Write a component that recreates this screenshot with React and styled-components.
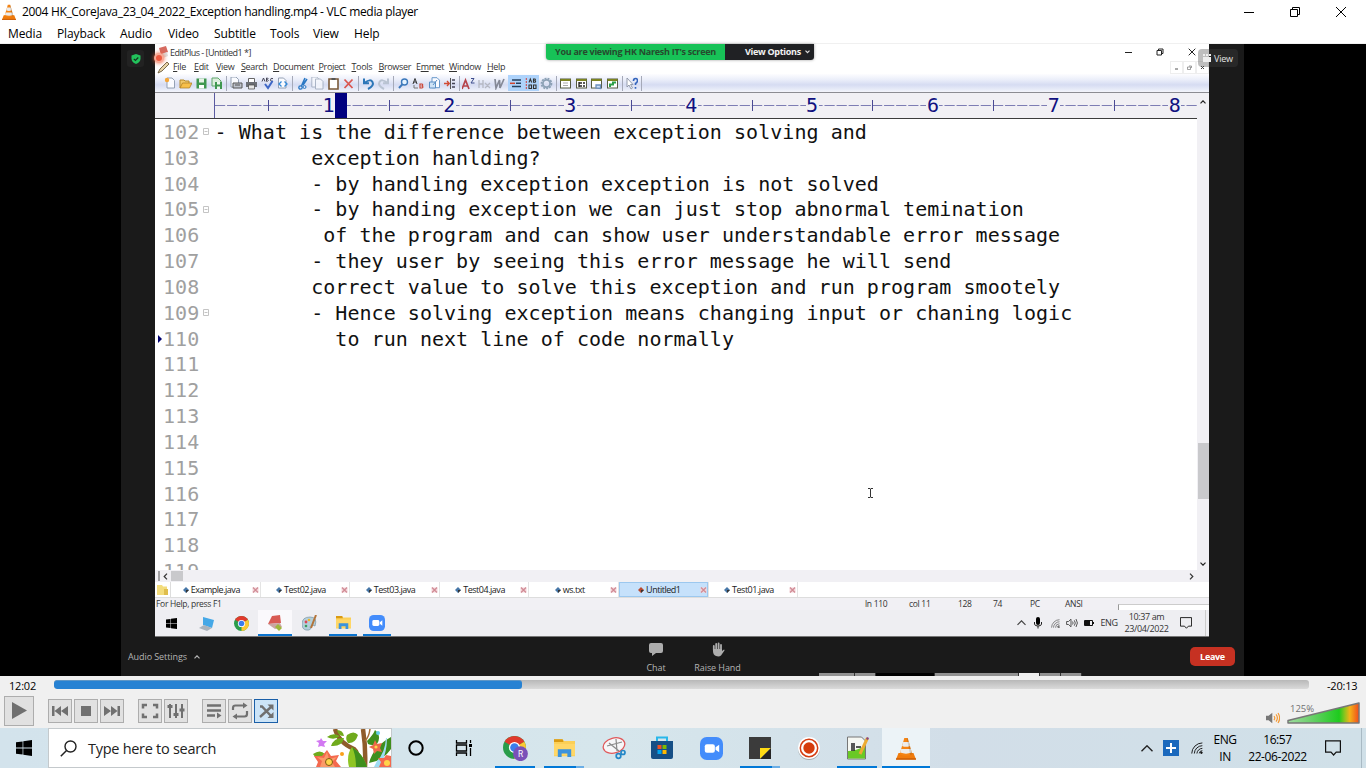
import React from "react";
import styled, { createGlobalStyle, css } from "styled-components";

const Global = createGlobalStyle`
  * { box-sizing: border-box; }
  html, body { margin: 0; padding: 0; overflow: hidden; }
  body { width: 1366px; height: 768px; font-family: "Open Sans", "Noto Sans", sans-serif; color: #000; }
  svg { display: block; flex: none; }
`;

const Screen = styled.div`
  width: 1366px; height: 768px; display: flex; flex-direction: column; background: #fff;
`;

/* ---------- player window ---------- */
const TitleBar = styled.header`
  height: 24px; display: flex; align-items: center; padding: 0 2px; flex: none;
`;
const Title = styled.span`
  font-size: 12px; line-height: 16px; margin-left: 6px; flex: 1; white-space: nowrap;
  letter-spacing: ${(p) => p.$ls || 0}px;
`;
const WindowButtons = styled.div`
  display: flex; height: 21px; align-items: center;
`;
const WinButton = styled.span`
  width: 46px; display: flex; justify-content: center;
`;
const MenuBar = styled.nav`
  height: 20px; flex: none; display: flex; align-items: center; border-bottom: 1px solid #f0f0f0;
`;
const MenuEntry = styled.span`
  font-size: 12px; line-height: 18px; padding-left: 8px; white-space: nowrap; flex: none;
  width: ${(p) => p.$w}px; letter-spacing: ${(p) => p.$ls || 0}px;
`;
const Stage = styled.main`
  height: 632px; flex: none; background: #000; display: flex; justify-content: center; padding-right: 1px;
`;

/* ---------- meeting window ---------- */
const Meeting = styled.section`
  width: 1123px; height: 632px; background: #1a1a1a; position: relative;
  display: flex; flex-direction: column; padding-left: 34px;
`;
const Shared = styled.section`
  width: 1054px; height: 593px; background: #fff; display: flex; flex-direction: column; flex: none;
  overflow: hidden; color: #333;
`;
const ShieldBadge = styled.div`
  position: absolute; left: 6px; top: 6px; width: 17px; height: 17px; border-radius: 3px; background: #222;
  display: flex; align-items: center; justify-content: center;
`;
const Banner = styled.div`
  position: absolute; left: 425px; top: 0; height: 16px; width: 268px; display: flex;
  border-radius: 0 0 3px 3px; overflow: hidden; box-shadow: 0 0 3px #999;
  font-size: 9px; font-weight: 700; line-height: 16px; white-space: nowrap; letter-spacing: -0.3px;
`;
const BannerMessage = styled.span`
  width: 179px; background: #17c257; color: #264a2e; text-align: center; letter-spacing: -0.27px;
`;
const BannerOptions = styled.span`
  flex: 1; background: #202124; color: #f2f2f2; display: flex; align-items: center; padding-left: 20px; gap: 4px;
`;
const ViewBadge = styled.div`
  position: absolute; left: 1077px; top: 5px; width: 40px; height: 18px; border-radius: 4px;
  background: rgba(70, 70, 70, 0.35); color: #e4e4e4; font-size: 9px; display: flex; align-items: center;
  padding-left: 5px; gap: 3px; letter-spacing: -0.2px;
`;
const RecordDot = styled.div`
  position: absolute; left: 33px; top: 9px; width: 10px; height: 10px; border-radius: 50%;
  background: #ee5940; border: 2px solid #f8ab97; box-shadow: 0 0 4px #f35c35;
`;
const TextCursor = styled.div`
  position: absolute; left: 746px; top: 444px;
`;
const MeetingBar = styled.footer`
  height: 39px; margin-left: -34px; display: flex; align-items: flex-start; color: #b4b4b4; font-size: 9px;
  letter-spacing: -0.08px;
`;
const AudioSettings = styled.div`
  width: 510px; padding: 13px 0 0 7px; display: flex; align-items: center; gap: 7px; line-height: 14px;
`;
const MeetingAction = styled.div`
  width: ${(p) => p.$w}px; display: flex; flex-direction: column; align-items: center; padding-top: 5px;
  line-height: 12px; gap: 5px; white-space: nowrap;
`;
const Leave = styled.button`
  margin: 10px 9px 0 auto; width: 45px; height: 19px; border: 0; border-radius: 5px; background: #c63122;
  color: #fff; font: 700 9px/18px "Open Sans", sans-serif; padding: 0; letter-spacing: -0.3px;
`;
const Strip = styled.div`
  position: absolute; left: 698px; bottom: 0; height: 3px; width: 263px; display: flex;
`;
const StripPart = styled.span`
  width: ${(p) => p.$w}px; background: ${(p) => p.$c}; border-right: 1px solid #333;
`;

/* ---------- text editor ---------- */
const EdTitle = styled.div`
  height: 16px; display: flex; align-items: center; flex: none; padding: 0 1px 0 2px; font-size: 9px;
`;
const EdTitleText = styled.span`
  flex: 1; margin-left: 2px; letter-spacing: -0.5px; white-space: nowrap;
`;
const EdWinButton = styled.span`
  width: 32px; display: flex; justify-content: center;
`;
const EdMenu = styled.div`
  height: 14px; display: flex; align-items: center; flex: none; font-size: 9px; padding-left: 2px;
`;
const EdMenuEntry = styled.span`
  width: ${(p) => p.$w}px; flex: none; white-space: nowrap; line-height: 14px; letter-spacing: -0.35px;
`;
const ChildButtons = styled.div`
  margin-left: auto; display: flex; height: 13px;
`;
const ChildButton = styled.span`
  width: 13px; border: 1px solid #eee; display: flex; align-items: center; justify-content: center;
`;
const EdToolbar = styled.div`
  height: 18px; flex: none; display: flex; align-items: center; padding-left: 7.7px;
  background: linear-gradient(#fdfdff 0, #eceffa 30%, #d6dcf2 60%, #e7ebf8 85%, #f4f5fb);
`;
const Tool = styled.span`
  width: 15.5px; height: 16px; flex: none; display: flex; align-items: center; justify-content: center;
  background: ${(p) => (p.$on ? "#aed3fb" : "transparent")};
`;
const ToolSep = styled.i`
  width: 1px; height: 15px; margin: 0 1.4px 0 1.5px; background: #a5a9b8; flex: none;
`;
const Ruler = styled.div`
  height: 27px; flex: none; display: flex; background: #f1f0f4; border-top: 1px solid #8c8c92;
  border-bottom: 1px solid #3c3c3c; overflow: hidden; font: 20px "DejaVu Sans Mono", monospace; color: #101080;
  width: 1042px;
`;
const dashes = css`
  background: linear-gradient(90deg, #7d7db4 10.5px, transparent 10.5px) 0 12px / 12.08px 1px repeat-x;
`;
const RulerLead = styled.span`
  width: 54px; margin-left: 59px; border-left: 1px solid #5a5aa0; flex: none; ${dashes}
`;
const RulerCell = styled.span`
  width: 120.9px; flex: none; display: flex; position: relative; line-height: 25px; ${dashes}
  &::before { content: ""; width: 1px; height: 11px; margin-top: 7px; background: #4a4a94; }
`;
const RulerDigit = styled.b`
  font-weight: 400; width: 13px; text-align: center; margin-left: 53px; background: #f1f0f4;
`;
const RulerCaret = styled.i`
  width: 12px; height: 26px; background: #00007f;
`;
const EdBody = styled.div`
  height: 478px; flex: none; display: flex;
`;
const EdMain = styled.div`
  width: 1042px; display: flex; flex-direction: column; overflow: hidden;
`;
const Code = styled.div`
  flex: 1; overflow: hidden; font: 20px "DejaVu Sans Mono", monospace;
`;
const CodeLine = styled.div`
  height: 25.83px; line-height: 26px; display: flex; white-space: pre; letter-spacing: 0.04px; color: #111;
`;
const Marker = styled.span`
  width: 8px; display: flex; align-items: center; padding-left: 3px;
`;
const LineNo = styled.span`
  width: 38px; color: #a0a0a0; 
`;
const Fold = styled.span`
  width: 13.5px; display: flex; align-items: center; padding-left: 2px;
`;
const VScroll = styled.div`
  width: 12px; background: #f1f0f4; display: flex; flex-direction: column; align-items: center;
  padding: 7px 0 4px; border-top: 1px solid #8c8c92;
`;
const VThumb = styled.i`
  width: 11px; height: 56px; background: #c9c9cc; margin: 339px 0 auto;
`;
const HScroll = styled.div`
  height: 12px; flex: none; background: #f1f0f4; display: flex; align-items: center; padding: 0 15px 0 3px; gap: 3px;
`;
const HThumb = styled.i`
  width: 12px; height: 10px; background: #c9c9cc; margin-right: auto;
`;
const Tabs = styled.div`
  height: 15px; flex: none; display: flex; font-size: 9px; background: #fff; color: #222;
`;
const TabFolder = styled.span`
  width: 16px; border-right: 1px solid #ddd; display: flex; align-items: center; padding-left: 2px;
`;
const Tab = styled.span`
  width: 89.6px; display: flex; align-items: center; border-right: 1px solid #e4e4e4; padding-right: 1px;
  letter-spacing: -0.48px;
  background: ${(p) => (p.$on ? "#c6e1fb" : "#fff")};
  ${(p) => p.$on && "box-shadow: inset 0 0 0 1px #9cc8ef;"}
`;
const TabName = styled.span`
  flex: 1; display: flex; align-items: center; justify-content: center; gap: 2px; white-space: nowrap;
`;
const Status = styled.div`
  height: 13px; flex: none; display: flex; background: #f1f0f4; border-top: 1px solid #ddd; font-size: 8.5px;
  line-height: 12px; padding-left: 1px; white-space: nowrap; letter-spacing: -0.3px;
`;
const StatusItem = styled.span`
  width: ${(p) => p.$w}px; flex: none;
`;
const StatusNotice = styled.span`
  flex: 1; margin-top: 6px; background: #fff; border-left: 1px solid #999; border-top: 1px solid #ccc;
`;
const InnerTaskbar = styled.div`
  height: 27px; flex: none; display: flex; background: #eeeef2; border-bottom: 1px solid #777; font-size: 9px;
`;
const InnerApp = styled.span`
  width: ${(p) => p.$w}px; flex: none; display: flex; align-items: center; justify-content: center;
  background: ${(p) => (p.$on ? "#faf9fc" : "transparent")};
  ${(p) => p.$line && `box-shadow: inset 0 -2px #0b74cf;`}
  margin-right: ${(p) => p.$gap || 0}px;
`;
const InnerTray = styled.span`
  margin-left: auto; display: flex; align-items: center;
`;
const InnerTraySlot = styled.span`
  width: ${(p) => p.$w}px; display: flex; justify-content: center; text-align: center; line-height: 12.5px;
  white-space: nowrap; letter-spacing: -0.4px;
`;
const InnerEdge = styled.i`
  width: 4px; height: 26px; border-left: 1px solid #ccc;
`;

/* ---------- player controls ---------- */
const Controls = styled.section`
  height: 52px; flex: none; background: #f0f0f0; display: flex; flex-direction: column;
`;
const SeekRow = styled.div`
  height: 20px; display: flex; align-items: center; font-size: 11px;
`;
const Time = styled.span`
  width: ${(p) => p.$w}px; padding-left: ${(p) => p.$pl}px; letter-spacing: -0.2px; line-height: 18px;
`;
const Seek = styled.div`
  width: 1255px; height: 9px; margin-top: -3px; border-radius: 3px; background: linear-gradient(#b8b8b8, #dadada); overflow: hidden;
`;
const SeekFill = styled.div`
  height: 9px; border-radius: 3px; background: #2782d3; border-top: 1px solid #5e96c6;
`;
const ButtonRow = styled.div`
  height: 32px; display: flex; align-items: flex-start; padding-left: 4px;
`;
const PlayerButton = styled.button`
  width: ${(p) => (p.$big ? 30 : 24)}px; height: ${(p) => (p.$big ? 30 : 24)}px; padding: 0; flex: none;
  margin: ${(p) => (p.$big ? 0 : 3)}px ${(p) => p.$gap}px 0 0;
  display: flex; align-items: center; justify-content: center;
  border: 1px solid ${(p) => (p.$on ? "#1a5fa8" : "#adadad")}; background: ${(p) => (p.$on ? "#cce4f7" : "#e1e1e1")};
`;
const Volume = styled.div`
  margin: 6px 6px 0 auto; display: flex; align-items: flex-end; gap: 7px;
`;
const VolumeMeter = styled.div`
  position: relative; width: 73px; height: 22px;
`;
const VolumeText = styled.span`
  position: absolute; left: 3px; top: 0; font-size: 9.5px; line-height: 14px; color: #707070;
`;

/* ---------- desktop taskbar ---------- */
const Taskbar = styled.footer`
  height: 40px; flex: none; display: flex; background: linear-gradient(90deg, #d3e3ec, #d6e6ec 45%, #d2dee8 70%, #d0e0e8);
`;
const TaskCell = styled.span`
  width: ${(p) => p.$w || 49}px; flex: none; display: flex; align-items: center; justify-content: center;
`;
const AppCell = styled(TaskCell)`
  height: 40px; position: relative; 
  background: ${(p) => (p.$on ? "#ecf3f7" : "transparent")};
  &::after {
    content: ""; display: ${(p) => (p.$line ? "block" : "none")}; position: absolute; bottom: 0;
    left: ${(p) => (p.$on ? 0 : 4)}px; right: ${(p) => (p.$on ? 0 : 5)}px; height: 2px;
    background: ${(p) => (p.$line === "multi" ? "linear-gradient(90deg,#0078d7 80%,#6aaee6 80%)" : "#0078d7")};
  }
`;
const SearchBox = styled.div`
  width: 344px; height: 40px; border: 1px solid #c4c9cc; background: #fff; display: flex; align-items: center;
  padding-left: 11px; flex: none;
`;
const SearchText = styled.span`
  font-size: 14.5px; margin-left: 11px; color: #222; flex: 1; white-space: nowrap; letter-spacing: -0.28px;
`;
const Tray = styled.div`
  margin-left: auto; display: flex; align-items: center; font-size: 12px;
`;
const TraySlot = styled.span`
  width: ${(p) => p.$w}px; display: flex; align-items: center; justify-content: center; text-align: center;
  line-height: 17px; white-space: nowrap; letter-spacing: -0.4px;
`;
const TrayEdge = styled.i`
  width: 5px; height: 40px; border-left: 1px solid #a9bac4;
`;

/* ---------- drawings ---------- */
const Svg = ({ w = 14, h, box, children, ...r }) => (
  <svg width={w} height={h || w} viewBox={box || `0 0 ${w} ${h || w}`} fill="none" {...r}>{children}</svg>
);
const Cone = ({ w }) => (
  <Svg w={w} h={w * 1.15} box="0 0 20 23">
    <path d="M2.5 16h15L20 22.5H0z" fill="#f07b0c" />
    <path d="M0 21.3h20v1.4H0z" fill="#c95b05" />
    <path d="M8.3 1h3.4l4.6 16.3q-6.3 3-12.6 0z" fill="#f58414" />
    <path d="M7.2 5h5.6l1.1 4q-3.9 1.7-7.8 0zM5.2 12h9.6l1 3.6q-5.8 2.3-11.6 0z" fill="#ececec" />
    <path d="M11.7 1l4.6 16.3-2.2.7L10.8 1z" fill="#000" opacity=".13" />
  </Svg>
);
const WinLogo = ({ w, c = "#000" }) => (
  <Svg w={w} box="0 0 16 16"><path fill={c} d="M0 2.3l6.6-.9v6.2H0zM7.3 1.2L16 0v7.6H7.3zM0 8.4h6.6v6.2L0 13.7zM7.3 8.4H16V16l-8.7-1.2z" /></Svg>
);
const Chrome = ({ w, badge }) => (
  <Svg w={w} box={badge ? "0 0 24 24" : "0 0 22 22"}>
    <circle cx="11" cy="11" r="11" fill="#2a9d4a" />
    <path d="M11 11L1.5 5.500A11 11 0 0 1 20.500 5.500z" fill="#e0392c" />
    <path d="M11 11l9.500-5.500A11 11 0 0 1 11 22z" fill="#fcc934" />
    <circle cx="11" cy="11" r="5.3" fill="#fff" /><circle cx="11" cy="11" r="4.1" fill="#3b7ded" />
    {badge && <><circle cx="16.8" cy="17" r="7.1" fill="#7a50b8" /><text x="16.8" y="20" fontSize="8" textAnchor="middle" fill="#fff" fontFamily="Roboto">R</text></>}
  </Svg>
);
const Explorer = ({ w }) => (
  <Svg w={w} h={w * 0.88} box="0 0 22 19">
    <path d="M0 0h9l1.5 2H22v16H0z" fill="#fbcf56" /><path d="M0 0h9l1 3H0z" fill="#d99a13" />
    <path d="M0 5h22v12H0z" fill="#ffd767" />
    <path d="M4 19v-8.5h14V19h-4v-4H8v4z" fill="#3c93dc" />
  </Svg>
);
const ZoomApp = ({ w }) => (
  <Svg w={w} box="0 0 24 24"><rect width="24" height="24" rx="7" fill="#438cfb" /><rect x="5" y="7.5" width="10.5" height="9" rx="2.2" fill="#fff" /><path d="M16.2 10.7L20 8v8l-3.800-2.700z" fill="#fff" /></Svg>
);
const Chevron = ({ w, c = "#222", up, sw = 1.2 }) => (
  <Svg w={w} h={w / 2 + 1} box={`0 0 ${w} ${w / 2 + 1}`}><path d={up ? `M.5 ${w / 2 + 0.3}L${w / 2} .8l${w / 2 - 0.5} ${w / 2 - 0.5}` : `M.5 .7l${w / 2 - 0.5} ${w / 2 - 0.5}L${w - 0.5} .7`} stroke={c} strokeWidth={sw} /></Svg>
);
const Side = ({ right }) => (
  <Svg w={5} h={7}><path d={right ? "M1 .7l2.8 2.8L1 6.3" : "M4 .7L1.2 3.5 4 6.3"} stroke="#333" strokeWidth="1.2" /></Svg>
);
const Wifi = ({ w, c = "#111" }) => (
  <Svg w={w} box="0 0 13 13" stroke={c} strokeWidth="1">
    <path d="M.8 12.5A11.700 11.700 0 0 1 12.300 1M3.600 12.500A8.800 8.800 0 0 1 12.300 4M6.400 12.500A6 6 0 0 1 12.300 6.900" /><path d="M9 12.300a3.300 3.300 0 0 1 3.300-2.900" /><circle cx="11.3" cy="11.6" r=".9" fill={c} />
  </Svg>
);
const Note = ({ w, h }) => (
  <Svg w={w} h={h} box="0 0 16 16"><path d="M.6.8h14.8v11.400h-4.200L8.600 15 6 12.200H.6z" stroke="#111" strokeWidth="1.2" /></Svg>
);
const Speaker = ({ w, c = "#777", wave = "#f49a35" }) => (
  <Svg w={w} h={w * 0.86} box="0 0 14 12"><path d="M0 3.800h2.600L6.300.7v10.600L2.600 8.200H0z" fill={c} /><path d="M8 4q1.600 2 0 4M10 2.400q2.800 3.600 0 7.200M12 1q3.200 5 0 10" stroke={wave} strokeWidth="1.2" /></Svg>
);
const SpeakerOutline = () => (
  <Svg w={12} h={10}><path d="M.6 3.500h1.900L5 1.200v7.600L2.500 6.500H.6z" stroke="#444" strokeWidth=".9" /><path d="M6.600 3.500q1 1.500 0 3M8.300 2.300q2 2.700 0 5.400M10 1q2.800 4 0 8" stroke="#444" strokeWidth=".9" /></Svg>
);
const Page = ({ x = 2, y = 1, c = "#8a97ac" }) => <path d={`M${x} ${y}h5l2.5 2.5v7.5h-7.5z`} fill="#fafbff" stroke={c} strokeWidth=".9" />;
const Win = ({ children }) => <><rect x="1.5" y="2" width="10" height="9" fill="#fff" stroke="#555a42" /><path d="M1.5 3h10" stroke="#7d8420" strokeWidth="2" />{children}</>;

const tools = [
  <><Page x={3} /><circle cx="3" cy="3" r="2.2" fill="#f4a63a" /></>,
  <><path d="M1 11V3h4l1 1h4v2" fill="#f2c96b" stroke="#b78a2b" /><path d="M1 11l2.5-5H13l-2.5 5z" fill="#f7bf4a" stroke="#a9791c" strokeWidth=".7" /></>,
  <><path d="M1.5 1.5h10v10h-10z" fill="#3f9750" /><path d="M4 1.5h5v4H4z" fill="#e6f2e6" /><path d="M4 8h5v3.5H4z" fill="#fff" /></>,
  <><path d="M2 1h6l3 3v5H2z" fill="#dceedd" stroke="#5fa56b" /><path d="M5 5h7v7H5z" fill="#3f9750" /><path d="M7 5h3v2.500H7zM7 9.500h3V12H7z" fill="#eef7ee" /></>,
  null,
  <><Page x={1} y={0} /><path d="M3 6h9v5H3z" fill="#bcc1cb" stroke="#555" /><path d="M5 8h5" stroke="#555" /></>,
  <><path d="M3.5 1.5h6v4h-6z" fill="#fff" stroke="#666" /><path d="M1 5h11v5H1z" fill="#6c6f76" /><path d="M3.5 8h6v4h-6z" fill="#e7e7e7" stroke="#444" strokeWidth=".7" /></>,
  <><path d="M1 4.5L2.5 1 4 4.5M5.5 1v3.3h1q1.5-.8 0-1.7 1.3-.7 0-1.6zM12 1.6q-2.5-1-2.5 1.3t2.5 1.2" stroke="#445" /><path d="M4 7l3 4 4.500-7" stroke="#3e67c7" strokeWidth="2" /></>,
  <><Page x={2.5} /><path d="M5.500 4.500L3 7l2.500 2.500M8.500 4.500L11 7 8.500 9.500" stroke="#3288d8" strokeWidth="1.3" /></>,
  null,
  <><path d="M9 1L5.5 9M11 2L7 8" stroke="#2b78c4" strokeWidth="1.6" /><circle cx="4.500" cy="10.500" r="1.700" stroke="#2b78c4" strokeWidth="1.3" /><circle cx="8.500" cy="10" r="1.500" stroke="#2b78c4" /></>,
  <g opacity=".7"><Page x={0.8} y={0} /><Page x={4.5} y={2} /></g>,
  <><path d="M2 2h9v10H2z" fill="#fff" stroke="#7a5a3a" strokeWidth="1.6" /><path d="M4.5 1h4v2h-4z" fill="#555" /></>,
  <path d="M2.5 2.5l8 8.5M10.5 2.5l-8 8.5" stroke="#da5650" strokeWidth="1.8" />,
  null,
  <path d="M3 5.5q5.5-4 7.500-.5T6 12M2 1.5v4.700h5" stroke="#2c76b8" strokeWidth="2" />,
  <path d="M10 5.5q-5.500-4-7.500-.5T7 12M11 1.5v4.700H6" stroke="#b9c3d2" strokeWidth="2" />,
  null,
  <><circle cx="7.5" cy="5" r="3" fill="#e3f2ff" stroke="#3b78bb" strokeWidth="1.4" /><path d="M5.3 7.3L2 11" stroke="#3b78bb" strokeWidth="2" /></>,
  <><path d="M1 7l2-5.5L5 7M1.7 5h2.5" stroke="#333" /><path d="M8 7v4h2q2-1 0-2 1.5-1 0-2z" stroke="#c43" strokeWidth="1.2" /><path d="M2 8v3h4" stroke="#777" /></>,
  <><Page x={4} y={0.7} c="#5a8fc4" /><path d="M1.5 5h6v6h-6z" fill="#cfe3f6" stroke="#5a8fc4" /><path d="M5 8l4-5" stroke="#5a8fc4" /></>,
  <><path d="M1 6.5h5M4 4l2.3 2.5L4 9" stroke="#d24a33" strokeWidth="1.3" /><path d="M7.5 1v11" stroke="#555" /><path d="M9 3h3M9 6.5h3M9 10h3" stroke="#445" strokeWidth="1.4" /></>,
  null,
  <><path d="M0 12L3.500 3 7 12M1.3 9h4.400" stroke="#b6434b" strokeWidth="1.7" /><path d="M9 1.5h3L9 6h3.5" stroke="#3d4c8c" /></>,
  <path d="M1 3v8M5 3v8M1 7h4M7 6l5 5M12 6l-5 5" stroke="#b5b8c3" strokeWidth="1.3" />,
  <path d="M2 2l1 9 3.500-8 .5 8 4-9" stroke="#858997" strokeWidth="1.7" />,
  <><path d="M3 3h9M7 6.3h5M3 9.6h9" stroke="#26405f" strokeWidth="1.5" /><path d="M1 6.3h5" stroke="#d2442f" strokeWidth="1.5" /></>,
  <><path d="M2.3 1v12" stroke="#c44" strokeDasharray="2 1" /><path d="M5 5.5L6.3 2l1.4 3.5M9.5 2v3.3h1.400q1.500-.8 0-1.700 1-.8 0-1.600zM5 8h2.500v3.500H5zM9.500 8H12v3.500H9.500z" stroke="#333" strokeWidth="1.1" /></>,
  <><circle cx="6.5" cy="6.5" r="5" stroke="#8ba0b5" strokeWidth="1.7" strokeDasharray="2 1" /><circle cx="6.5" cy="6.5" r="3.6" stroke="#8ba0b5" strokeWidth="1.8" /></>,
  null,
  <Win><path d="M4 6h5M4 8.5h5" stroke="#aaa" /></Win>,
  <Win><path d="M4 5v5M4 6h3M4 9h3M8 6h2M8 9h2" stroke="#222" strokeWidth="1.3" /></Win>,
  <Win><path d="M6 11V8h4.500v3.500z" fill="#cfe0f6" stroke="#6a8ebd" strokeWidth="1.3" /></Win>,
  <Win><path d="M4 10V7.5h3V5.500h3" stroke="#2ca048" strokeWidth="2" /></Win>,
  null,
  <><path d="M2 1v9l2-2 2 4 1.500-1-2-3.500H8z" fill="#fff" stroke="#8a93a5" strokeWidth=".9" /><path d="M8.500 4q0-2.500 2-2.500t2 2-2 3v1.600M10.500 10v1.700" stroke="#3565bd" strokeWidth="1.6" /></>,
  null,
];

const lines = [
  "- What is the difference between exception solving and",
  "        exception hanlding?",
  "        - by handling exception exception is not solved",
  "        - by handing exception we can just stop abnormal temination",
  "         of the program and can show user understandable error message",
  "        - they user by seeing this error message he will send",
  "        correct value to solve this exception and run program smootely",
  "        - Hence solving exception means changing input or chaning logic",
  "          to run next line of code normally",
];

const mainMenu = [["Media", 49], ["Playback", 63], ["Audio", 48], ["Video", 46], ["Subtitle", 56], ["Tools", 43], ["View", 41], ["Help", 40]];
/* text before the access key, the access key, the rest, width */
const editorMenu = [
  ["", "F", "ile", 21], ["", "E", "dit", 22], ["", "V", "iew", 25], ["", "S", "earch", 32], ["", "D", "ocument", 45.5],
  ["", "P", "roject", 33], ["", "T", "ools", 27], ["", "B", "rowser", 37.5], ["E", "m", "met", 33], ["", "W", "indow", 38], ["", "H", "elp", 30],
];
const tabs = ["Example.java", "Test02.java", "Test03.java", "Test04.java", "ws.txt", "Untitled1", "Test01.java"];

const Flowers = () => (
  <Svg w={78} h={38}>
    <path d="M22 0q4 14 19 20 5 4 5 18M50 0q3 20 2 38" stroke="#8f5c2b" strokeWidth="4.5" />
    <path d="M52 12q4-4 5-12" stroke="#a86f38" strokeWidth="1.5" />
    <path d="M14 8q6-5 13-1-6 5-13 1zM18 17q3-9 13-8-2 9-13 8zM34 6q7-5 11 0-3 9-10 8-3-4-1-8zM24 1q6 0 7 6-6 0-7-6zM0 25q7-5 12 0 4 3 4 8Q5 34 0 25z" fill="#70aa1c" />
    <path d="M36 38q-3-12 3-20 12 8 15 20z" fill="#8fc524" />
    <path d="M43 38q0-12-4-20 12 8 15 20zM54 12q6-6 8-11 7 6 2 14-5 2-9 0zM56 34q4-16 22-26v12q-8 12-22 14z" fill="#3f8f1d" />
    <path d="M73 9q-1 15-9 23l-3 6h6q7-14 7-29z" fill="#9fdcf3" />
    <path d="M14 21l4 6 8-1-3 6 5 6H3l2-5-4-6 8 0z" fill="#f4694e" /><path d="M14 23l2 7 8-2-5 5 3 5H7l2-6-5-4 7 1z" fill="#fb9a68" /><circle cx="16" cy="33" r="3.500" fill="#ffd44a" stroke="#7d5a10" />
    <path d="M62 11l2 4 5-1-2 5 2 4-5-1-3 3-1-5-4-2 4-2z" fill="#ed6a4a" /><circle cx="63" cy="18" r="1.600" fill="#ffd44a" />
    <path d="M73 26l5 1v11H66l2-5-3-4 6 0z" fill="#f4694e" /><circle cx="74" cy="34" r="3" fill="#ffd44a" />
    <path d="M8 9l2 3 4 0-3 3 1 3-4-1-3 1 1-4-3-2 4-1z" fill="#d278f2" /><circle cx="29" cy="25" r="2" fill="#f9a01b" /><circle cx="65" cy="4" r="2" fill="#61cde4" />
  </Svg>
);

const MeetingWindow = () => (
  <Meeting>
    <Shared>
      <EdTitle>
        <Svg w={11} h={14}><path d="M2 3l7-2 2 6-7 3z" fill="#d66b60" /><path d="M4 9l6-2 1 4-5 2z" fill="#ddd" /></Svg>
        <EdTitleText>EditPlus - [Untitled1 *]</EdTitleText>
        <EdWinButton><Svg w={8}><path d="M1 4.500h7" stroke="#222" /></Svg></EdWinButton>
        <EdWinButton><Svg w={8}><path d="M1 2.5h4.5V7H1zM2.5 2V1H7v4.5H5.5" stroke="#222" /></Svg></EdWinButton>
        <EdWinButton><Svg w={8}><path d="M.7.7l6.6 6.6M7.3.7L.7 7.3" stroke="#222" /></Svg></EdWinButton>
      </EdTitle>
      <EdMenu>
        <Svg w={16} h={13}><path d="M1 12l2-4 7-7 2 2-7 7z" fill="#e8d5a8" stroke="#6b5a3c" strokeWidth=".9" /></Svg>
        {editorMenu.map(([before, key, after, w]) => (
          <EdMenuEntry key={key + after} $w={w}>{before}<u>{key}</u>{after}</EdMenuEntry>
        ))}
        <ChildButtons>
          <ChildButton><Svg w={5}><path d="M1 4h3" stroke="#555" /></Svg></ChildButton>
          <ChildButton><Svg w={5}><path d="M.5 2h3v2.5h-3zM2 1h2.5v2" stroke="#777" strokeWidth=".7" /></Svg></ChildButton>
          <ChildButton><Svg w={5}><path d="M1 1l3 3M4 1L1 4" stroke="#444" /></Svg></ChildButton>
        </ChildButtons>
      </EdMenu>
      <EdToolbar>
        {tools.map((t, i) => t ? <Tool key={i} $on={i === 26 || i === 27}><Svg w={13}>{t}</Svg></Tool> : <ToolSep key={i} />)}
      </EdToolbar>
      <EdBody>
        <EdMain>
          <Ruler>
            <RulerLead />
            {[1, 2, 3, 4, 5, 6, 7, 8].map((n) => (
              <RulerCell key={n}><RulerDigit>{n}</RulerDigit>{n === 1 && <RulerCaret />}</RulerCell>
            ))}
          </Ruler>
          <Code>
            {Array.from({ length: 18 }, (_, i) => (
              <CodeLine key={i}>
                <Marker>{i === 8 && <Svg w={4} h={8}><path d="M0 0l4 4-4 4z" fill="#00006f" /></Svg>}</Marker>
                <LineNo>{102 + i}</LineNo>
                <Fold>{[0, 3, 7].includes(i) && <Svg w={7}><path d="M.5.5h5v6h-5zM1.5 3.5h3" stroke="#c4c4c4" /></Svg>}</Fold>
                {lines[i]}
              </CodeLine>
            ))}
          </Code>
        </EdMain>
        <VScroll>
          <Chevron w={6} up /><VThumb /><Chevron w={6} />
        </VScroll>
      </EdBody>
      <HScroll>
        <Svg w={2} h={10}><path d="M1 0v10" stroke="#555" /></Svg><Side /><HThumb /><Side right />
      </HScroll>
      <Tabs>
        <TabFolder><Svg w={11}><path d="M0 1h5l1 1.5h4V11H0z" fill="#f3dc7c" /><path d="M7 5h4v6H7z" fill="#dfbd4c" /></Svg></TabFolder>
        {tabs.map((t) => (
          <Tab key={t} $on={t === "Untitled1"}>
            <TabName>
              <Svg w={6}><path d="M3 0l3 3-3 3-3-3z" fill={t === "Untitled1" ? "#b84a30" : "#4676a7"} /><path d="M3 3h3L3 6z" fill="#333" /></Svg>{t}
            </TabName>
            <Svg w={7} h={6}><path d="M.5.5h6v5h-6z" fill="#f4d4d8" /><path d="M1 .5l5 5M6 .5l-5 5" stroke="#cf8b95" strokeWidth="1.2" /></Svg>
          </Tab>
        ))}
      </Tabs>
      <Status>
        <StatusItem $w={709}>For Help, press F1</StatusItem>
        <StatusItem $w={44}>ln 110</StatusItem><StatusItem $w={49}>col 11</StatusItem><StatusItem $w={35}>128</StatusItem>
        <StatusItem $w={37}>74</StatusItem><StatusItem $w={35}>PC</StatusItem><StatusItem $w={53}>ANSI</StatusItem>
        <StatusNotice />
      </Status>
      <InnerTaskbar>
        <InnerApp $w={33}><WinLogo w={11} /></InnerApp>
        <InnerApp $w={37}><Svg w={16} h={15}><path d="M4 1l11 3-2 8-9-3z" fill="#45a8e7" /><path d="M0 12l5-3 8 3-5 3z" fill="#aab3bc" /></Svg></InnerApp>
        <InnerApp $w={33}><Chrome w={15} /></InnerApp>
        <InnerApp $w={34} $on $line $gap={1}><Svg w={16}><path d="M5 1l8-1 1 8-13 1z" fill="#d85b54" /><path d="M1 9l12-1 2 4-7 2z" fill="#c9a5a2" /><path d="M8 12l3-3 4 4-3 3z" fill="#9fb83d" /></Svg></InnerApp>
        <InnerApp $w={33} $gap={3}><Svg w={16}><path d="M8 2Q0 2 0 9t7 6q3-1 1-3 1-3 5-1 3-9-5-9z" fill="#b3cfdb" stroke="#7895a5" strokeWidth=".7" /><path d="M14 0L9 13" stroke="#b3743a" strokeWidth="2" /><circle cx="4" cy="7" r="1.4" fill="#d45" /><circle cx="7" cy="5" r="1.3" fill="#edb52c" /><circle cx="4" cy="11" r="1.3" fill="#3b9d60" /></Svg></InnerApp>
        <InnerApp $w={28} $line $gap={6}><Explorer w={15} /></InnerApp>
        <InnerApp $w={28} $line><ZoomApp w={16} /></InnerApp>
        <InnerTray>
          <InnerTraySlot $w={18}><Chevron w={9} up c="#444" /></InnerTraySlot>
          <InnerTraySlot $w={16}><Svg w={8} h={12}><rect x="2" y="0" width="4" height="8" rx="2" fill="#000" /><path d="M.5 5v2q0 2 3.500 2T7.500 7V5M4 9v2.500" stroke="#222" /></Svg></InnerTraySlot>
          <InnerTraySlot $w={18}><Wifi w={9} c="#555" /></InnerTraySlot>
          <InnerTraySlot $w={16}><SpeakerOutline /></InnerTraySlot>
          <InnerTraySlot $w={17}><Svg w={10} h={7}><path d="M.5.5h8v5h-8z" stroke="#111" /><path d="M1 1h5v4H1zM9 2h1v2H9z" fill="#111" /></Svg></InnerTraySlot>
          <InnerTraySlot $w={24}>ENG</InnerTraySlot>
          <InnerTraySlot $w={51}>10:37 am<br />23/04/2022</InnerTraySlot>
          <InnerTraySlot $w={27}><Note w={12} h={12} /></InnerTraySlot>
          <InnerTraySlot $w={6} />
          <InnerEdge />
        </InnerTray>
      </InnerTaskbar>
    </Shared>
    <MeetingBar>
      <AudioSettings>Audio Settings <Chevron w={6} up c="#b4b4b4" /></AudioSettings>
      <MeetingAction $w={50}>
        <Svg w={16} h={15}><path d="M3 1h10q2 0 2 2v6q0 2-2 2H8l-4 3v-3H3q-2 0-2-2V3q0-2 2-2z" fill="#adadad" /></Svg>Chat
      </MeetingAction>
      <MeetingAction $w={73}>
        <Svg w={14} h={15}><path d="M2.800 8V4M5.200 7V2M7.600 7V1.500M10 8V3" stroke="#adadad" strokeWidth="1.800" strokeLinecap="round" /><path d="M2 7h9v2l2-1.500q1 .3.3 1.300L10 13.500Q8 15 5 14 2 13 2 9z" fill="#adadad" /></Svg>Raise Hand
      </MeetingAction>
      <Leave>Leave</Leave>
    </MeetingBar>
    <ShieldBadge><Svg w={10}><path d="M5 0l4.500 1.500v3Q9.500 8 5 10 .5 8 .5 4.500v-3z" fill="#22c25b" /><path d="M2.800 4.800l1.600 1.700L7.300 3.500" stroke="#15351f" strokeWidth="1.200" /></Svg></ShieldBadge>
    <RecordDot />
    <Banner>
      <BannerMessage>You are viewing HK Naresh IT's screen</BannerMessage>
      <BannerOptions>View Options <Chevron w={5} c="#ddd" /></BannerOptions>
    </Banner>
    <ViewBadge><Svg w={8}><path d="M0 0h2v2H0zM3 0h2v2H3zM6 0h2v2H6zM0 3h8v5H0z" fill="#eee" /></Svg>View</ViewBadge>
    <TextCursor><Svg w={7} h={10}><path d="M1 .5h2l.5.5.5-.5h2M3.500 1v8M1 9.500h2l.5-.5.5.5h2" stroke="#333" /></Svg></TextCursor>
    <Strip><StripPart $w={36} $c="#929292" /><StripPart $w={21} $c="#929292" /><StripPart $w={59} $c="#000" /><StripPart $w={84} $c="#929292" /><StripPart $w={21} $c="#eee" /><StripPart $w={21} $c="#929292" /><StripPart $w={21} $c="#929292" /></Strip>
  </Meeting>
);

const G = "#707070";
const buttons = [
  { gap: 14, big: true, d: <path d="M8 6v17l15-8.500z" fill={G} />, s: 30 },
  { gap: 2, d: <path d="M4 7h2.500v10H4zM13 7v10l-6.500-5zM20 7v10l-7-5z" fill={G} /> },
  { gap: 2, d: <path d="M7 7h10v10H7z" fill={G} /> },
  { gap: 14, d: <path d="M17.500 7H20v10h-2.500zM11 7v10l6.500-5zM4 7v10l7-5z" fill={G} /> },
  { gap: 2, d: <path d="M5 9.500V6h4M15 6h4v3.500M19 14.500V18h-4M9 18H5v-3.500" stroke={G} strokeWidth="2.500" /> },
  { gap: 14, d: <><path d="M6 5v14M12 5v14M18 5v14" stroke={G} strokeWidth="2" /><path d="M3.500 7.500h5M9.500 15.500h5M15.500 11h5" stroke={G} strokeWidth="3" /></> },
  { gap: 2, d: <><path d="M5 6.500h14M5 11.500h14M5 16.500h8" stroke={G} strokeWidth="2.500" /><path d="M15 13.500v6l4.500-3z" fill={G} /></> },
  { gap: 2, d: <><path d="M5 11V9q0-2.500 2.500-2.500H16M19 12v3q0 2.500-2.500 2.500H8" stroke={G} strokeWidth="2.200" /><path d="M15 3.500l4.500 3-4.500 3zM9 14.500v6l-4.500-3z" fill={G} /></> },
  { gap: 0, on: true, d: <><path d="M6 7.500l2 0 9 9.500M6 18L17 8" stroke={G} strokeWidth="2.400" /><path d="M13.500 5.500h6v6zM13.500 19h6v-6z" fill={G} /></> },
];

export default function App() {
  return (
    <Screen>
      <Global />
      <TitleBar>
        <Cone w={14} />
        <Title $ls={-0.33}>2004 HK_CoreJava_23_04_2022_Exception handling.mp4 - VLC media player</Title>
        <WindowButtons>
          <WinButton><Svg w={10}><path d="M0 5.500h10" stroke="#000" /></Svg></WinButton>
          <WinButton><Svg w={10}><path d="M.5 2.500h7v7h-7zM2.500 2.500v-2h7v7h-2" stroke="#000" /></Svg></WinButton>
          <WinButton><Svg w={10}><path d="M0 0l10 10M10 0L0 10" stroke="#000" /></Svg></WinButton>
        </WindowButtons>
      </TitleBar>
      <MenuBar>{mainMenu.map(([t, w]) => <MenuEntry key={t} $w={w} $ls={-0.1}>{t}</MenuEntry>)}</MenuBar>
      <Stage><MeetingWindow /></Stage>
      <Controls>
        <SeekRow>
          <Time $w={54} $pl={9}>12:02</Time>
          <Seek><SeekFill style={{ width: 468 }} /></Seek>
          <Time $w={57} $pl={18}>-20:13</Time>
        </SeekRow>
        <ButtonRow>
          {buttons.map((b, i) => <PlayerButton key={i} $big={b.big} $gap={b.gap} $on={b.on}><Svg w={b.s || 24}>{b.d}</Svg></PlayerButton>)}
          <Volume>
            <Speaker w={14} />
            <VolumeMeter>
              <Svg w={73} h={22}>
                <defs><linearGradient id="vol"><stop offset="0" stopColor="#9fdc9f" /><stop offset=".3" stopColor="#6fd16f" /><stop offset=".72" stopColor="#1ecb1e" /><stop offset=".8" stopColor="#8ec41e" /><stop offset=".87" stopColor="#f3b318" /><stop offset="1" stopColor="#f14a1c" /></linearGradient></defs>
                <path d="M1 18.500L72 1v20H1z" fill="url(#vol)" stroke="#777" strokeWidth="1.500" strokeLinejoin="round" />
              </Svg>
              <VolumeText>125%</VolumeText>
            </VolumeMeter>
          </Volume>
        </ButtonRow>
      </Controls>
      <Taskbar>
        <TaskCell $w={48}><WinLogo w={16} /></TaskCell>
        <SearchBox>
          <Svg w={17}><circle cx="10.500" cy="6.500" r="5.500" stroke="#222" strokeWidth="1.400" /><path d="M6.500 10.500L.8 16.200" stroke="#222" strokeWidth="1.500" /></Svg>
          <SearchText>Type here to search</SearchText>
          <Flowers />
        </SearchBox>
        <TaskCell $w={48}><Svg w={16}><circle cx="8" cy="8" r="6.700" stroke="#000" strokeWidth="2" /></Svg></TaskCell>
        <TaskCell $w={48}><Svg w={18} h={16}><path d="M1.500 0v3h10V0M1.500 5h10v6h-10zM1.500 16v-3h10v3M15.500 0v3M15.500 8v8" stroke="#000" strokeWidth="1.300" /><path d="M14 4h3v3h-3z" fill="#000" /></Svg></TaskCell>
        <TaskCell $w={3} />
        <AppCell $line="one"><Chrome w={25} badge /></AppCell>
        <AppCell $line="multi"><Explorer w={21} /></AppCell>
        <AppCell><Svg w={24}><ellipse cx="12" cy="9.500" rx="11" ry="7.500" fill="#f6f6f8" stroke="#e0585a" strokeWidth="1.300" transform="rotate(-15 12 9.500)" /><path d="M5 10l15-4M14 3l1 12M7 7l10 8" stroke="#888" strokeWidth="1.200" /><circle cx="16.500" cy="20" r="2.300" stroke="#2487c7" strokeWidth="1.700" /><circle cx="21" cy="16.500" r="2" stroke="#2487c7" strokeWidth="1.700" /></Svg></AppCell>
        <AppCell $w={48.5}><Svg w={24}><path d="M7 6V1.500h10V6" stroke="#29b7ea" strokeWidth="2" /><path d="M1 5h22v16q0 2-2 2H3q-2 0-2-2z" fill="#164f86" /><path d="M7.500 9h4v4h-4z" fill="#f25022" /><path d="M12.500 9h4v4h-4z" fill="#7fba00" /><path d="M7.500 14h4v4h-4z" fill="#00a4ef" /><path d="M12.500 14h4v4h-4z" fill="#ffb900" /></Svg></AppCell>
        <AppCell><ZoomApp w={23} /></AppCell>
        <AppCell $line="multi"><Svg w={22}><path d="M0 0h22v11L11 22H0z" fill="#3b3b3b" /><path d="M11 11h11L11 22z" fill="#ffdc14" /><path d="M22 11v11H11z" fill="#252525" /></Svg></AppCell>
        <AppCell $w={48.5}><Svg w={24}><circle cx="12" cy="13" r="11" fill="#777" opacity=".5" /><circle cx="12" cy="12" r="11" fill="#fff" /><circle cx="12" cy="12" r="8.700" stroke="#d53d12" strokeWidth="1.500" /><circle cx="12" cy="12" r="5.700" fill="#d53c0c" /></Svg></AppCell>
        <AppCell $line="one"><Svg w={24}><path d="M1.500 1h14l4 4v18h-18z" fill="#f5f7f2" stroke="#777" /><path d="M2 15q8 0 17-5v12.500H2z" fill="#69c925" /><path d="M6 7v8M8 7v8M10 11h5" stroke="#222" strokeWidth="1.500" /><path d="M21.500 2L14 18" stroke="#edab31" strokeWidth="3" /><path d="M20.500 2l2 1" stroke="#8a4880" strokeWidth="2.500" /></Svg></AppCell>
        <AppCell $w={48} $on $line="one"><Cone w={20} /></AppCell>
        <Tray>
          <TraySlot $w={24}><Chevron w={12} up sw={1.4} /></TraySlot>
          <TraySlot $w={24}><Svg w={16}><path d="M0 0h16v16H0z" fill="#1b69bd" /><path d="M8 3v10M3 8h10" stroke="#fff" strokeWidth="2" /></Svg></TraySlot>
          <TraySlot $w={27}><Wifi w={12} /></TraySlot>
          <TraySlot $w={30}>ENG<br />IN</TraySlot>
          <TraySlot $w={75}>16:57<br />22-06-2022</TraySlot>
          <TraySlot $w={35}><Note w={16} h={16} /></TraySlot>
          <TraySlot $w={11} />
          <TrayEdge />
        </Tray>
      </Taskbar>
    </Screen>
  );
}
